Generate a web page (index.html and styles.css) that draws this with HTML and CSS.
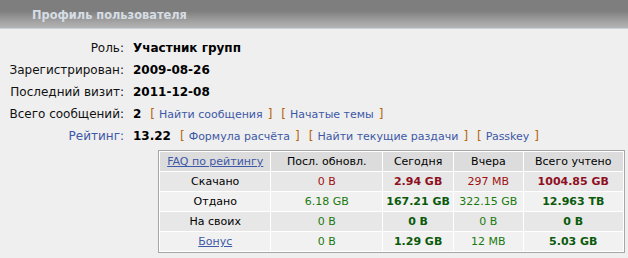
FILE: index.html
```html
<!DOCTYPE html>
<html lang="ru">
<head>
<meta charset="utf-8">
<link rel="stylesheet" href="styles.css">
</head>
<body>
<div class="head"><span class="head-title">Профиль пользователя</span></div>
<div class="info">
  <div class="lbl">Роль:</div><div class="val"><b>Участник групп</b></div>
  <div class="lbl">Зарегистрирован:</div><div class="val"><b>2009-08-26</b></div>
  <div class="lbl">Последний визит:</div><div class="val"><b>2011-12-08</b></div>
  <div class="lbl">Всего сообщений:</div>
  <div class="val">
    <b>2</b>
    <span class="grp"><span class="br">[</span><a class="lnk">Найти сообщения</a><span class="br">]</span></span>
    <span class="grp"><span class="br">[</span><a class="lnk">Начатые темы</a><span class="br">]</span></span>
  </div>
  <div class="lbl lbl-link">Рейтинг:</div>
  <div class="val">
    <b>13.22</b>
    <span class="grp"><span class="br">[</span><a class="lnk">Формула расчёта</a><span class="br">]</span></span>
    <span class="grp"><span class="br">[</span><a class="lnk">Найти текущие раздачи</a><span class="br">]</span></span>
    <span class="grp"><span class="br">[</span><a class="lnk">Passkey</a><span class="br">]</span></span>
  </div>
</div>
<table class="stats">
  <tr class="hdr">
    <td class="c1"><a class="ul">FAQ по рейтингу</a></td>
    <td class="c2">Посл. обновл.</td>
    <td class="c3">Сегодня</td>
    <td class="c4">Вчера</td>
    <td class="c5">Всего учтено</td>
  </tr>
  <tr class="odd">
    <td>Скачано</td>
    <td class="red">0 B</td>
    <td class="red"><b>2.94 GB</b></td>
    <td class="red">297 MB</td>
    <td class="red"><b>1004.85 GB</b></td>
  </tr>
  <tr class="even">
    <td>Отдано</td>
    <td class="grn">6.18 GB</td>
    <td class="grn"><b>167.21 GB</b></td>
    <td class="grn">322.15 GB</td>
    <td class="grn"><b>12.963 TB</b></td>
  </tr>
  <tr class="odd">
    <td>На своих</td>
    <td class="grn">0 B</td>
    <td class="grn"><b>0 B</b></td>
    <td class="grn">0 B</td>
    <td class="grn"><b>0 B</b></td>
  </tr>
  <tr class="even">
    <td><a class="ul">Бонус</a></td>
    <td class="grn">0 B</td>
    <td class="grn"><b>1.29 GB</b></td>
    <td class="grn">12 MB</td>
    <td class="grn"><b>5.03 GB</b></td>
  </tr>
</table>
</body>
</html>
```
FILE: styles.css
```css
html, body {
  margin: 0;
  padding: 0;
  background: #efefef;
  font-family: "DejaVu Sans", Verdana, sans-serif;
  color: #000;
}
.head {
  height: 28px;
  background: linear-gradient(to bottom, #7e7e7e 0px, #7e7e7e 11px, #a4a4a4 22px, #b4b4b4 28px);
  border-bottom: 1px solid #c9d3dc;
  display: flex;
  align-items: center;
  padding-left: 32px;
}
.head-title {
  font-weight: bold;
  font-size: 11.4px;
  color: #d6dde4;
  padding-top: 1px;
}
.info {
  display: grid;
  grid-template-columns: 124px auto;
  column-gap: 9px;
  grid-auto-rows: 22px;
  margin-top: 8px;
  align-items: center;
}
.lbl {
  text-align: right;
  font-size: 12px;
  color: #111;
}
.lbl-link { color: #3d58a6; }
.val {
  font-size: 12px;
  white-space: nowrap;
  display: flex;
  align-items: baseline;
  gap: 9px;
}
.val b { font-weight: bold; }
.grp { display: inline-flex; align-items: baseline; }
.br { color: #b5650c; font-size: 12px; }
.grp .br:first-child { margin-right: 4px; }
.grp .br:last-child { margin-left: 5px; }
.lnk { color: #3d58a6; font-size: 11px; }
.stats {
  margin: 3px 0 0 158px;
  border: 1px solid #a7a7a7;
  border-spacing: 1px;
  background: #fff;
  font-size: 11px;
  width: 467px;
}
.stats td {
  text-align: center;
  height: 19px;
  padding: 0;
  white-space: nowrap;
}
.hdr td { background: #dcdcdc; }
.odd td { background: #e7e7e7; }
.even td { background: #f1f1f1; }
.c1 { width: 110px; }
.c2 { width: 110px; }
.c3 { width: 70px; }
.c4 { width: 68px; }
.c5 { width: 99px; }
.ul { color: #3d58a6; text-decoration: underline; }
.red { color: #a01010; }
.red b { color: #8e0f1e; }
.grn { color: #1b7a0f; }
.grn b { color: #0b5a0b; }
```
